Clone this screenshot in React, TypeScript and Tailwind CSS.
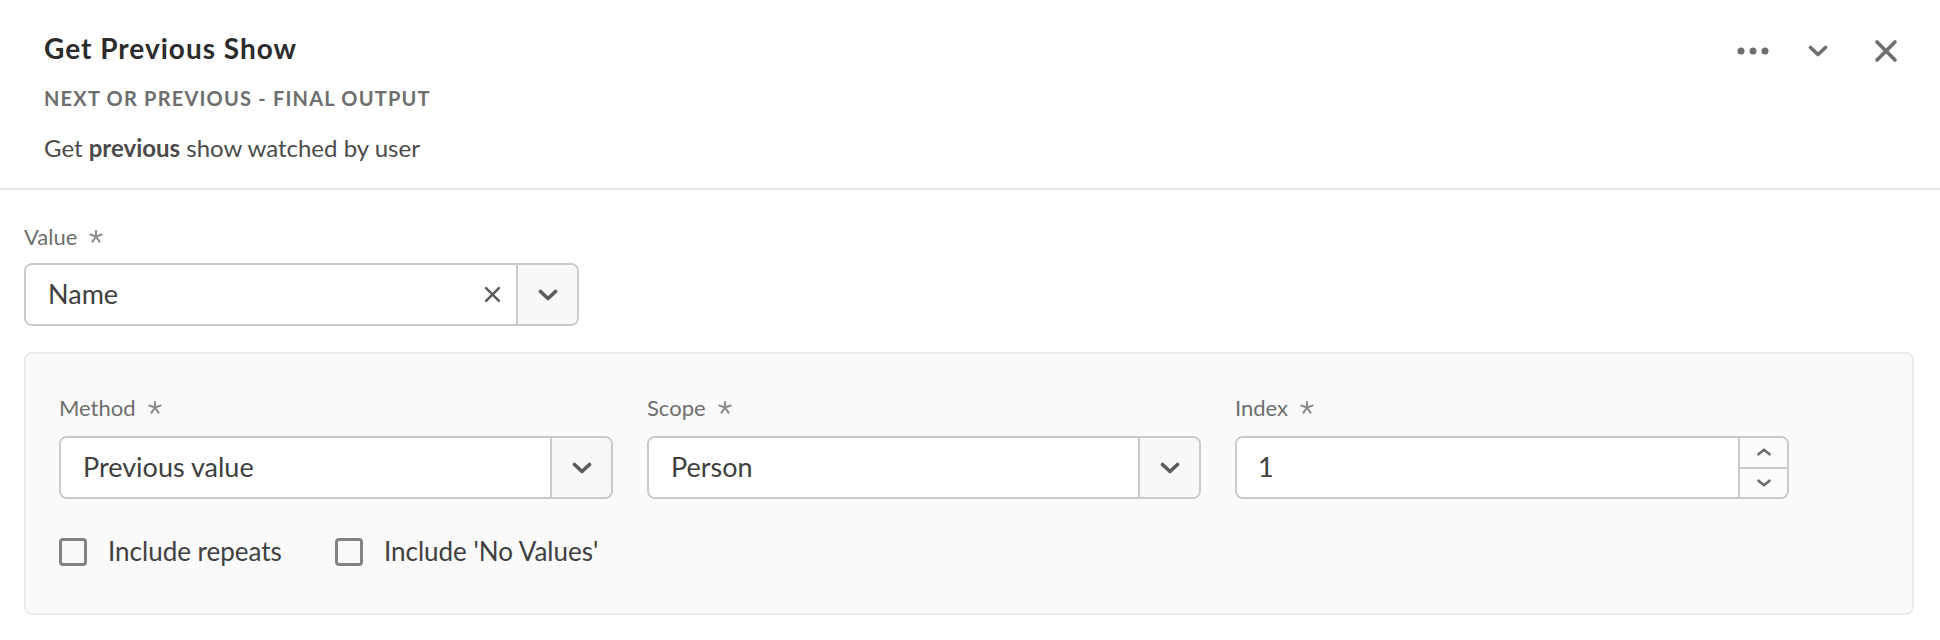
import { useState } from "react";

/* ── Icons ── */
const ChevronDown = ({ className = "" }: { className?: string }) => (
  <svg width="20" height="12" viewBox="0 0 20 12" className={className} fill="none">
    <path d="M2.5 2.5 L10 9.5 L17.5 2.5" stroke="currentColor" strokeWidth="3.6" strokeLinecap="round" strokeLinejoin="round" />
  </svg>
);

const SmallChevron = ({ up = false }: { up?: boolean }) => (
  <svg width="16" height="8" viewBox="0 0 16 8" fill="none">
    <path
      d={up ? "M2.5 6.3 L8 1.7 L13.5 6.3" : "M2.5 1.7 L8 6.3 L13.5 1.7"}
      stroke="currentColor"
      strokeWidth="2.6"
      strokeLinecap="round"
      strokeLinejoin="round"
    />
  </svg>
);

const CrossIcon = ({ size, stroke }: { size: number; stroke: number }) => (
  <svg width={size} height={size} viewBox="0 0 24 24" fill="none">
    <path d="M3 3 L21 21 M21 3 L3 21" stroke="currentColor" strokeWidth={stroke} strokeLinecap="round" />
  </svg>
);

const MoreIcon = () => (
  <svg width="32" height="8" viewBox="0 0 32 8" fill="currentColor">
    <circle cx="4" cy="4" r="3.5" />
    <circle cx="16" cy="4" r="3.5" />
    <circle cx="28" cy="4" r="3.5" />
  </svg>
);

const Asterisk = () => (
  <svg width="14" height="13" viewBox="0 0 14 13" fill="none" className="text-[#8e8e8e]">
    <path
      d="M7 6.5 L7 1 M7 6.5 L12.6 4.6 M7 6.5 L1.4 4.6 M7 6.5 L10.5 11.6 M7 6.5 L3.5 11.6"
      stroke="currentColor"
      strokeWidth="2.1"
      strokeLinecap="round"
    />
  </svg>
);

/* ── Field pieces ── */
const FieldLabel = ({ text }: { text: string }) => (
  <div className="flex items-center h-[28px] text-[22px] leading-[28px] text-[#6e6e6e]">
    <span>{text}</span>
    <span className="ml-[12px] -translate-y-[1px]">
      <Asterisk />
    </span>
  </div>
);

const SelectField = ({ value, clearable = false, width }: { value: string; clearable?: boolean; width: string }) => (
  <div className={`flex h-[63px] rounded-[8px] border-2 border-[#cacaca] overflow-hidden ${width}`}>
    <div className="flex-1 flex items-center bg-white pl-[22px] pr-[14px]">
      <span className="flex-1 text-[27px] text-[#404040]">{value}</span>
      {clearable && (
        <span className="text-[#5a5a5a] mr-[1px]">
          <CrossIcon size={17} stroke={3.4} />
        </span>
      )}
    </div>
    <div className="w-[61px] flex items-center justify-center bg-[#f8f8f8] border-l-2 border-[#cacaca] text-[#5a5a5a]">
      <ChevronDown />
    </div>
  </div>
);

const NumberField = ({ value }: { value: string }) => (
  <div className="flex h-[63px] w-[554px] rounded-[8px] border-2 border-[#cacaca] overflow-hidden">
    <div className="flex-1 flex items-center bg-white pl-[21px] text-[27px] text-[#404040]">{value}</div>
    <div className="w-[49px] flex flex-col bg-[#fbfbfb] border-l-2 border-[#cacaca] text-[#6e6e6e]">
      <div className="flex-1 flex items-center justify-center border-b-2 border-[#cacaca]">
        <SmallChevron up />
      </div>
      <div className="flex-1 flex items-center justify-center">
        <SmallChevron />
      </div>
    </div>
  </div>
);

const Checkbox = ({ label }: { label: string }) => {
  const [checked, setChecked] = useState(false);
  return (
    <label className="flex items-center gap-[21px] cursor-pointer" onClick={() => setChecked(!checked)}>
      <span className="w-[28px] h-[28px] rounded-[4px] border-[3px] border-[#838383]" />
      <span className="text-[26px] text-[#404040]">{label}</span>
    </label>
  );
};

const App = () => {
  return (
    <div className="w-[1940px] h-[640px] bg-white [font-family:Lato,'Open_Sans',sans-serif]">
      {/* ── Header ── */}
      <div className="flex justify-between h-[190px] border-b-2 border-[#e6e6e6]">
        <div className="pl-[44px] pt-[32px]">
          <h1 className="text-[28px] leading-[32px] font-bold tracking-[1px] text-[#2c2c2c]">Get Previous Show</h1>
          <div className="mt-[22px] text-[20px] leading-[24px] font-bold tracking-[0.06em] text-[#6e6e6e]">
            NEXT OR PREVIOUS - FINAL OUTPUT
          </div>
          <p className="mt-[24px] text-[24px] leading-[28px] text-[#4b4b4b]">
            Get <span className="font-bold">previous</span> show watched by user
          </p>
        </div>
        <div className="flex items-start pt-[39px] pr-[42px] text-[#6e6e6e]">
          <button className="h-[24px] flex items-center">
            <MoreIcon />
          </button>
          <button className="h-[24px] flex items-center ml-[39px]">
            <ChevronDown />
          </button>
          <button className="h-[24px] flex items-center ml-[46px]">
            <CrossIcon size={24} stroke={3.6} />
          </button>
        </div>
      </div>

      {/* ── Body ── */}
      <div className="pl-[24px] pr-[26px] pt-[33px]">
        <FieldLabel text="Value" />
        <div className="mt-[12px]">
          <SelectField value="Name" clearable width="w-[555px]" />
        </div>

        <div className="mt-[26px] h-[263px] rounded-[8px] border-2 border-[#ebebeb] bg-[#fafafa] pl-[33px] pt-[40px]">
          <div className="flex gap-[34px]">
            <div className="flex flex-col gap-[14px]">
              <FieldLabel text="Method" />
              <SelectField value="Previous value" width="w-[554px]" />
            </div>
            <div className="flex flex-col gap-[14px]">
              <FieldLabel text="Scope" />
              <SelectField value="Person" width="w-[554px]" />
            </div>
            <div className="flex flex-col gap-[14px]">
              <FieldLabel text="Index" />
              <NumberField value="1" />
            </div>
          </div>
          <div className="flex items-center gap-[53px] mt-[33px]">
            <Checkbox label="Include repeats" />
            <Checkbox label="Include 'No Values'" />
          </div>
        </div>
      </div>
    </div>
  );
};

export default App;
